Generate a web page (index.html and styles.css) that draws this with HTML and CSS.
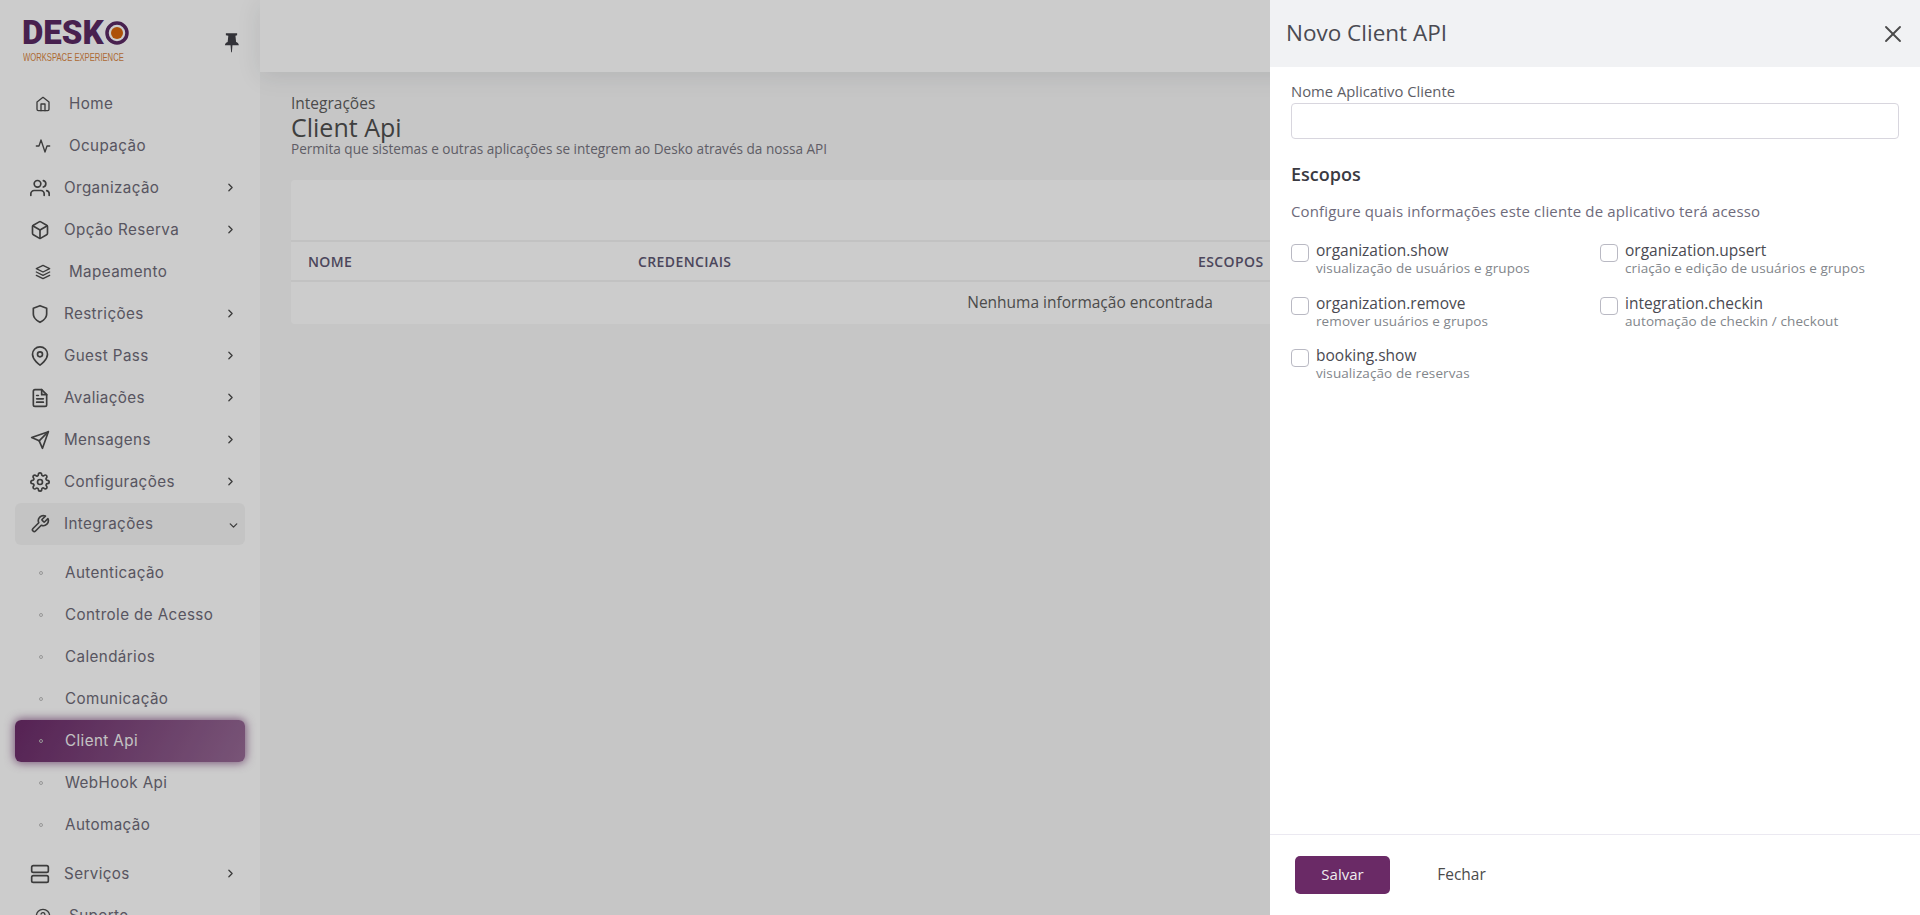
FILE: index.html
```html
<!DOCTYPE html>
<html>
	<head>
		<meta charset="UTF-8">
		<title>Client Api</title>
		<link rel="stylesheet" href="styles.css">
	</head>
	<body>
		<svg class="sprite" xmlns="http://www.w3.org/2000/svg">
			<symbol id="i-home" viewBox="0 0 24 24"><path d="M3 9l9-7 9 7v11a2 2 0 0 1-2 2H5a2 2 0 0 1-2-2z"/><polyline points="9 22 9 12 15 12 15 22"/></symbol>
			<symbol id="i-activity" viewBox="0 0 24 24"><polyline points="22 12 18 12 15 21 9 3 6 12 2 12"/></symbol>
			<symbol id="i-users" viewBox="0 0 24 24"><path d="M17 21v-2a4 4 0 0 0-4-4H5a4 4 0 0 0-4 4v2"/><circle cx="9" cy="7" r="4"/><path d="M23 21v-2a4 4 0 0 0-3-3.87"/><path d="M16 3.13a4 4 0 0 1 0 7.75"/></symbol>
			<symbol id="i-box" viewBox="0 0 24 24"><path d="M21 16V8a2 2 0 0 0-1-1.73l-7-4a2 2 0 0 0-2 0l-7 4A2 2 0 0 0 3 8v8a2 2 0 0 0 1 1.73l7 4a2 2 0 0 0 2 0l7-4A2 2 0 0 0 21 16z"/><polyline points="3.27 6.96 12 12.01 20.73 6.96"/><line x1="12" y1="22.08" x2="12" y2="12"/></symbol>
			<symbol id="i-layers" viewBox="0 0 24 24"><polygon points="12 2 2 7 12 12 22 7 12 2"/><polyline points="2 17 12 22 22 17"/><polyline points="2 12 12 17 22 12"/></symbol>
			<symbol id="i-shield" viewBox="0 0 24 24"><path d="M12 22s8-4 8-10V5l-8-3-8 3v7c0 6 8 10 8 10z"/></symbol>
			<symbol id="i-pin" viewBox="0 0 24 24"><path d="M21 10c0 7-9 13-9 13s-9-6-9-13a9 9 0 0 1 18 0z"/><circle cx="12" cy="10" r="3"/></symbol>
			<symbol id="i-file" viewBox="0 0 24 24"><path d="M14 2H6a2 2 0 0 0-2 2v16a2 2 0 0 0 2 2h12a2 2 0 0 0 2-2V8z"/><polyline points="14 2 14 8 20 8"/><line x1="16" y1="13" x2="8" y2="13"/><line x1="16" y1="17" x2="8" y2="17"/><polyline points="10 9 9 9 8 9"/></symbol>
			<symbol id="i-send" viewBox="0 0 24 24"><line x1="22" y1="2" x2="11" y2="13"/><polygon points="22 2 15 22 11 13 2 9 22 2"/></symbol>
			<symbol id="i-gear" viewBox="0 0 24 24"><circle cx="12" cy="12" r="3"/><path d="M19.4 15a1.65 1.65 0 0 0 .33 1.82l.06.06a2 2 0 0 1 0 2.83 2 2 0 0 1-2.83 0l-.06-.06a1.65 1.65 0 0 0-1.82-.33 1.65 1.65 0 0 0-1 1.51V21a2 2 0 0 1-2 2 2 2 0 0 1-2-2v-.09A1.65 1.65 0 0 0 9 19.4a1.65 1.65 0 0 0-1.82.33l-.06.06a2 2 0 0 1-2.83 0 2 2 0 0 1 0-2.83l.06-.06a1.65 1.65 0 0 0 .33-1.82 1.65 1.65 0 0 0-1.51-1H3a2 2 0 0 1-2-2 2 2 0 0 1 2-2h.09A1.65 1.65 0 0 0 4.6 9a1.65 1.65 0 0 0-.33-1.82l-.06-.06a2 2 0 0 1 0-2.83 2 2 0 0 1 2.83 0l.06.06a1.65 1.65 0 0 0 1.82.33H9a1.65 1.65 0 0 0 1-1.51V3a2 2 0 0 1 2-2 2 2 0 0 1 2 2v.09a1.65 1.65 0 0 0 1 1.51 1.65 1.65 0 0 0 1.82-.33l.06-.06a2 2 0 0 1 2.83 0 2 2 0 0 1 0 2.83l-.06.06a1.65 1.65 0 0 0-.33 1.82V9a1.65 1.65 0 0 0 1.51 1H21a2 2 0 0 1 2 2 2 2 0 0 1-2 2h-.09a1.65 1.65 0 0 0-1.51 1z"/></symbol>
			<symbol id="i-tool" viewBox="0 0 24 24"><path d="M14.7 6.3a1 1 0 0 0 0 1.4l1.6 1.6a1 1 0 0 0 1.4 0l3.77-3.77a6 6 0 0 1-7.94 7.94l-6.91 6.91a2.12 2.12 0 0 1-3-3l6.91-6.91a6 6 0 0 1 7.94-7.94l-3.76 3.76z"/></symbol>
			<symbol id="i-server" viewBox="0 0 24 24"><rect x="2" y="2" width="20" height="8" rx="2" ry="2"/><rect x="2" y="14" width="20" height="8" rx="2" ry="2"/></symbol>
			<symbol id="i-help" viewBox="0 0 24 24"><circle cx="12" cy="12" r="10"/><path d="M9.09 9a3 3 0 0 1 5.83 1c0 2-3 3-3 3"/><line x1="12" y1="17" x2="12.01" y2="17"/></symbol>
			<symbol id="i-right" viewBox="0 0 24 24"><polyline points="9 18 15 12 9 6"/></symbol>
			<symbol id="i-down" viewBox="0 0 24 24"><polyline points="6 9 12 15 18 9"/></symbol>
			<symbol id="i-x" viewBox="0 0 24 24"><line x1="18" y1="6" x2="6" y2="18"/><line x1="6" y1="6" x2="18" y2="18"/></symbol>
		</svg>

		<div class="app">
			<aside class="sidebar">
				<div class="brand">
					<div class="logo">
						<div class="logo-top">
							<span class="logo-word">DESK</span>
							<svg class="logo-o" viewBox="0 0 24 24"><circle cx="12" cy="12" r="10" fill="none" stroke="#5b2a63" stroke-width="3.500"/><circle cx="12" cy="12" r="6" fill="#d9660c"/></svg>
						</div>
						<div class="logo-sub">WORKSPACE EXPERIENCE</div>
					</div>
					<svg class="pin" viewBox="0 0 16 22"><path d="M2 1h12v2.200l-1.800.6.700 6.600c1.700.7 2.900 2 2.900 3.600H9l-.6 7.500h-.8L7 14H1c0-1.600 1.200-2.900 2.900-3.600l.7-6.600L2 3.200z"/></svg>
				</div>
				<nav class="menu">
					<a class="item plain"><svg class="ico"><use href="#i-home"/></svg>Home</a>
					<a class="item plain"><svg class="ico"><use href="#i-activity"/></svg>Ocupação</a>
					<a class="item"><svg class="ico"><use href="#i-users"/></svg>Organização<svg class="arrow"><use href="#i-right"/></svg></a>
					<a class="item"><svg class="ico"><use href="#i-box"/></svg>Opção Reserva<svg class="arrow"><use href="#i-right"/></svg></a>
					<a class="item plain"><svg class="ico"><use href="#i-layers"/></svg>Mapeamento</a>
					<a class="item"><svg class="ico"><use href="#i-shield"/></svg>Restrições<svg class="arrow"><use href="#i-right"/></svg></a>
					<a class="item"><svg class="ico"><use href="#i-pin"/></svg>Guest Pass<svg class="arrow"><use href="#i-right"/></svg></a>
					<a class="item"><svg class="ico"><use href="#i-file"/></svg>Avaliações<svg class="arrow"><use href="#i-right"/></svg></a>
					<a class="item"><svg class="ico"><use href="#i-send"/></svg>Mensagens<svg class="arrow"><use href="#i-right"/></svg></a>
					<a class="item"><svg class="ico"><use href="#i-gear"/></svg>Configurações<svg class="arrow"><use href="#i-right"/></svg></a>
					<a class="item open"><svg class="ico"><use href="#i-tool"/></svg>Integrações<svg class="arrow down"><use href="#i-down"/></svg></a>
					<div class="submenu">
						<a class="sub"><i></i>Autenticação</a>
						<a class="sub"><i></i>Controle de Acesso</a>
						<a class="sub"><i></i>Calendários</a>
						<a class="sub"><i></i>Comunicação</a>
						<a class="sub active"><i></i>Client Api</a>
						<a class="sub"><i></i>WebHook Api</a>
						<a class="sub"><i></i>Automação</a>
					</div>
					<a class="item"><svg class="ico"><use href="#i-server"/></svg>Serviços<svg class="arrow"><use href="#i-right"/></svg></a>
					<a class="item plain"><svg class="ico"><use href="#i-help"/></svg>Suporte</a>
				</nav>
			</aside>
			<div class="page">
				<header class="topbar"></header>
				<main class="content">
					<div class="crumb">Integrações</div>
					<h1>Client Api</h1>
					<p class="lead">Permita que sistemas e outras aplicações se integrem ao Desko através da nossa API</p>
					<section class="card">
						<div class="card-tools"></div>
						<div class="row head">
							<span>NOME</span>
							<span>CREDENCIAIS</span>
							<span>ESCOPOS</span>
						</div>
						<div class="empty">Nenhuma informação encontrada</div>
					</section>
				</main>
			</div>
		</div>

		<div class="backdrop"></div>

		<aside class="drawer">
			<div class="drawer-head">
				<h2>Novo Client API</h2>
				<svg class="close"><use href="#i-x"/></svg>
			</div>
			<div class="drawer-body">
				<label class="field-label">Nome Aplicativo Cliente</label>
				<input class="field" type="text">
				<h3>Escopos</h3>
				<p class="hint">Configure quais informações este cliente de aplicativo terá acesso</p>
				<div class="scopes">
					<label class="scope"><span class="check"></span><span class="scope-text"><b>organization.show</b><small>visualização de usuários e grupos</small></span></label>
					<label class="scope"><span class="check"></span><span class="scope-text"><b>organization.upsert</b><small>criação e edição de usuários e grupos</small></span></label>
					<label class="scope"><span class="check"></span><span class="scope-text"><b>organization.remove</b><small>remover usuários e grupos</small></span></label>
					<label class="scope"><span class="check"></span><span class="scope-text"><b>integration.checkin</b><small>automação de checkin / checkout</small></span></label>
					<label class="scope"><span class="check"></span><span class="scope-text"><b>booking.show</b><small>visualização de reservas</small></span></label>
				</div>
			</div>
			<div class="drawer-foot">
				<button class="btn save">Salvar</button>
				<button class="btn ghost">Fechar</button>
			</div>
		</aside>
	</body>
</html>
```

FILE: styles.css
```css
*{
	margin: 0;
	padding: 0;
	box-sizing: border-box;
}
html,body{
	height: 100%;
	width: 100%;
	overflow: hidden;
}
body{
	font-family: "Open Sans", "Noto Sans", sans-serif;
	color: #5e5873;
	background: #f8f8f8;
}
.sprite{
	display: none;
}
.app{
	display: flex;
	height: 915px;
}

/* menu lateral */
.sidebar{
	width: 260px;
	flex: none;
	background: #fff;
	overflow: hidden;
	font-family: "Inter", "Noto Sans", sans-serif;
}
.brand{
	height: 83px;
	display: flex;
	align-items: flex-start;
	justify-content: space-between;
	padding: 20px 21px 0 22px;
}
.logo-top{
	display: flex;
	align-items: center;
	height: 26px;
}
.logo-word{
	font-family: "Roboto", sans-serif;
	font-weight: 900;
	font-size: 33px;
	line-height: 26px;
	color: #5b2a63;
}
.logo-o{
	width: 24px;
	height: 24px;
	margin-left: 1px;
}
.logo-sub{
	font-family: "Liberation Sans", sans-serif;
	font-size: 10.500px;
	line-height: 10px;
	margin-top: 6px;
	margin-left: 1px;
	color: #d9863f;
	white-space: nowrap;
	transform: scaleX(.73);
	transform-origin: left;
}
.pin{
	width: 15px;
	height: 21px;
	margin-top: 12px;
	fill: #3f3f46;
}
.menu{
	display: flex;
	flex-direction: column;
}
.item, .sub{
	height: 42px;
	margin: 0 15px;
	width: 230px;
	display: flex;
	align-items: center;
	font-size: 15.200px;
	letter-spacing: .4px;
	color: #6e6b78;
	border-radius: 6px;
	flex: none;
	padding-bottom: 1px;
}
.item{
	padding-left: 15px;
}
.item .ico{
	width: 20px;
	height: 20px;
	margin-right: 14px;
	flex: none;
	fill: none;
	stroke: #4b4b4b;
	stroke-width: 2;
	stroke-linecap: round;
	stroke-linejoin: round;
}
.item.plain{
	padding-left: 20px;
}
.item.plain .ico{
	width: 16px;
	height: 16px;
	margin-right: 18px;
}
.arrow{
	width: 13px;
	height: 13px;
	margin-left: auto;
	margin-right: 8px;
	fill: none;
	stroke: #4b4b4b;
	stroke-width: 2.400;
	stroke-linecap: round;
	stroke-linejoin: round;
}
.arrow.down{
	margin-right: 5px;
	margin-top: 4px;
}
.item.open{
	background: #f6f6f6;
}
.submenu{
	display: flex;
	flex-direction: column;
	margin: 7px 0;
}
.sub{
	padding-left: 24px;
}
.sub i{
	width: 4px;
	height: 4px;
	border: 1px solid #bdbdbd;
	border-radius: 50%;
	margin-right: 22px;
	flex: none;
}
.sub.active{
	background: linear-gradient(118deg, #6b2b69, rgba(107,43,105,.7));
	box-shadow: 0 0 10px 1px rgba(107,43,105,.7);
	color: #f4f4f4;
}

/* conteudo */
.page{
	flex: 1;
	min-width: 0;
}
.topbar{
	height: 72px;
	background: #fff;
	box-shadow: 0 4px 24px rgba(34,41,47,.1);
}
.content{
	padding: 21px 31px 0;
}
.crumb{
	font-size: 15.500px;
	line-height: 20px;
	color: #5e5e5e;
}
h1{
	font-size: 25px;
	line-height: 28px;
	font-weight: 400;
	color: #4f4f4f;
}
.lead{
	font-size: 13.600px;
	line-height: 16px;
	color: #77757f;
}
.card{
	margin-top: 23px;
	background: #fff;
	border-radius: 4px;
}
.card-tools{
	height: 62px;
	border-bottom: 2px solid #f3f3f3;
}
.row.head{
	display: grid;
	grid-template-columns: 330px 560px 1fr;
	align-items: center;
	height: 40px;
	padding-left: 17px;
	border-bottom: 2px solid #f3f3f3;
	font-size: 14px;
	font-weight: 600;
	letter-spacing: .4px;
	color: #5e5873;
}
.empty{
	height: 42px;
	padding-bottom: 2px;
	display: flex;
	align-items: center;
	justify-content: center;
	font-size: 15.500px;
	color: #5e5e5e;
}

/* gaveta */
.backdrop{
	position: fixed;
	top: 0;
	left: 0;
	right: 0;
	bottom: 0;
	background: rgba(0,0,0,.2);
}
.drawer{
	position: fixed;
	top: 0;
	right: 0;
	bottom: 0;
	width: 650px;
	background: #fff;
	display: flex;
	flex-direction: column;
}
.drawer-head{
	height: 67px;
	flex: none;
	background: #f1f2f4;
	display: flex;
	align-items: center;
	justify-content: space-between;
	padding: 0 13px 0 16px;
}
h2{
	font-size: 22.500px;
	font-weight: 400;
	color: #4a4a52;
	margin-bottom: 2px;
}
.close{
	width: 28px;
	height: 28px;
	fill: none;
	stroke: #4b4b4b;
	stroke-width: 1.600;
	stroke-linecap: round;
}
.drawer-body{
	flex: 1;
	padding: 14px 21px 0;
}
.field-label{
	display: block;
	font-size: 14.800px;
	line-height: 20px;
	color: #5e5e66;
}
.field{
	display: block;
	width: 100%;
	height: 36px;
	margin-top: 2px;
	border: 1px solid #d8d6de;
	border-radius: 4px;
	background: #fff;
}
h3{
	margin-top: 23px;
	font-size: 18px;
	line-height: 24px;
	font-weight: 600;
	color: #3a3a42;
}
.hint{
	margin-top: 15px;
	font-size: 15px;
	letter-spacing: .15px;
	line-height: 20px;
	color: #6e6b7b;
}
.scopes{
	margin-top: 21px;
	display: grid;
	grid-template-columns: 1fr 1fr;
	column-gap: 10px;
	row-gap: 17.500px;
}
.scope{
	display: flex;
	gap: 7px;
}
.check{
	width: 18px;
	height: 18px;
	margin-top: 2px;
	border: 1px solid #b9b9c3;
	border-radius: 4px;
	flex: none;
}
.scope-text{
	margin-top: -1px;
}
.scope b{
	display: block;
	font-weight: 400;
	font-size: 15.500px;
	line-height: 18px;
	color: #4a4a52;
}
.scope small{
	display: block;
	font-size: 13.500px;
	letter-spacing: .1px;
	line-height: 18px;
	color: #82868b;
}
.drawer-foot{
	height: 81px;
	flex: none;
	border-top: 1px solid #ebe9f1;
	display: flex;
	align-items: center;
	gap: 24px;
	padding: 0 25px;
}
.btn{
	width: 95px;
	height: 38px;
	border: 0;
	border-radius: 5px;
	padding-bottom: 2px;
	font-family: inherit;
	font-size: 15px;
}
.save{
	background: #6a2a66;
	color: #eee;
}
.ghost{
	background: transparent;
	font-size: 15.500px;
	color: #4b4b4b;
}
```
